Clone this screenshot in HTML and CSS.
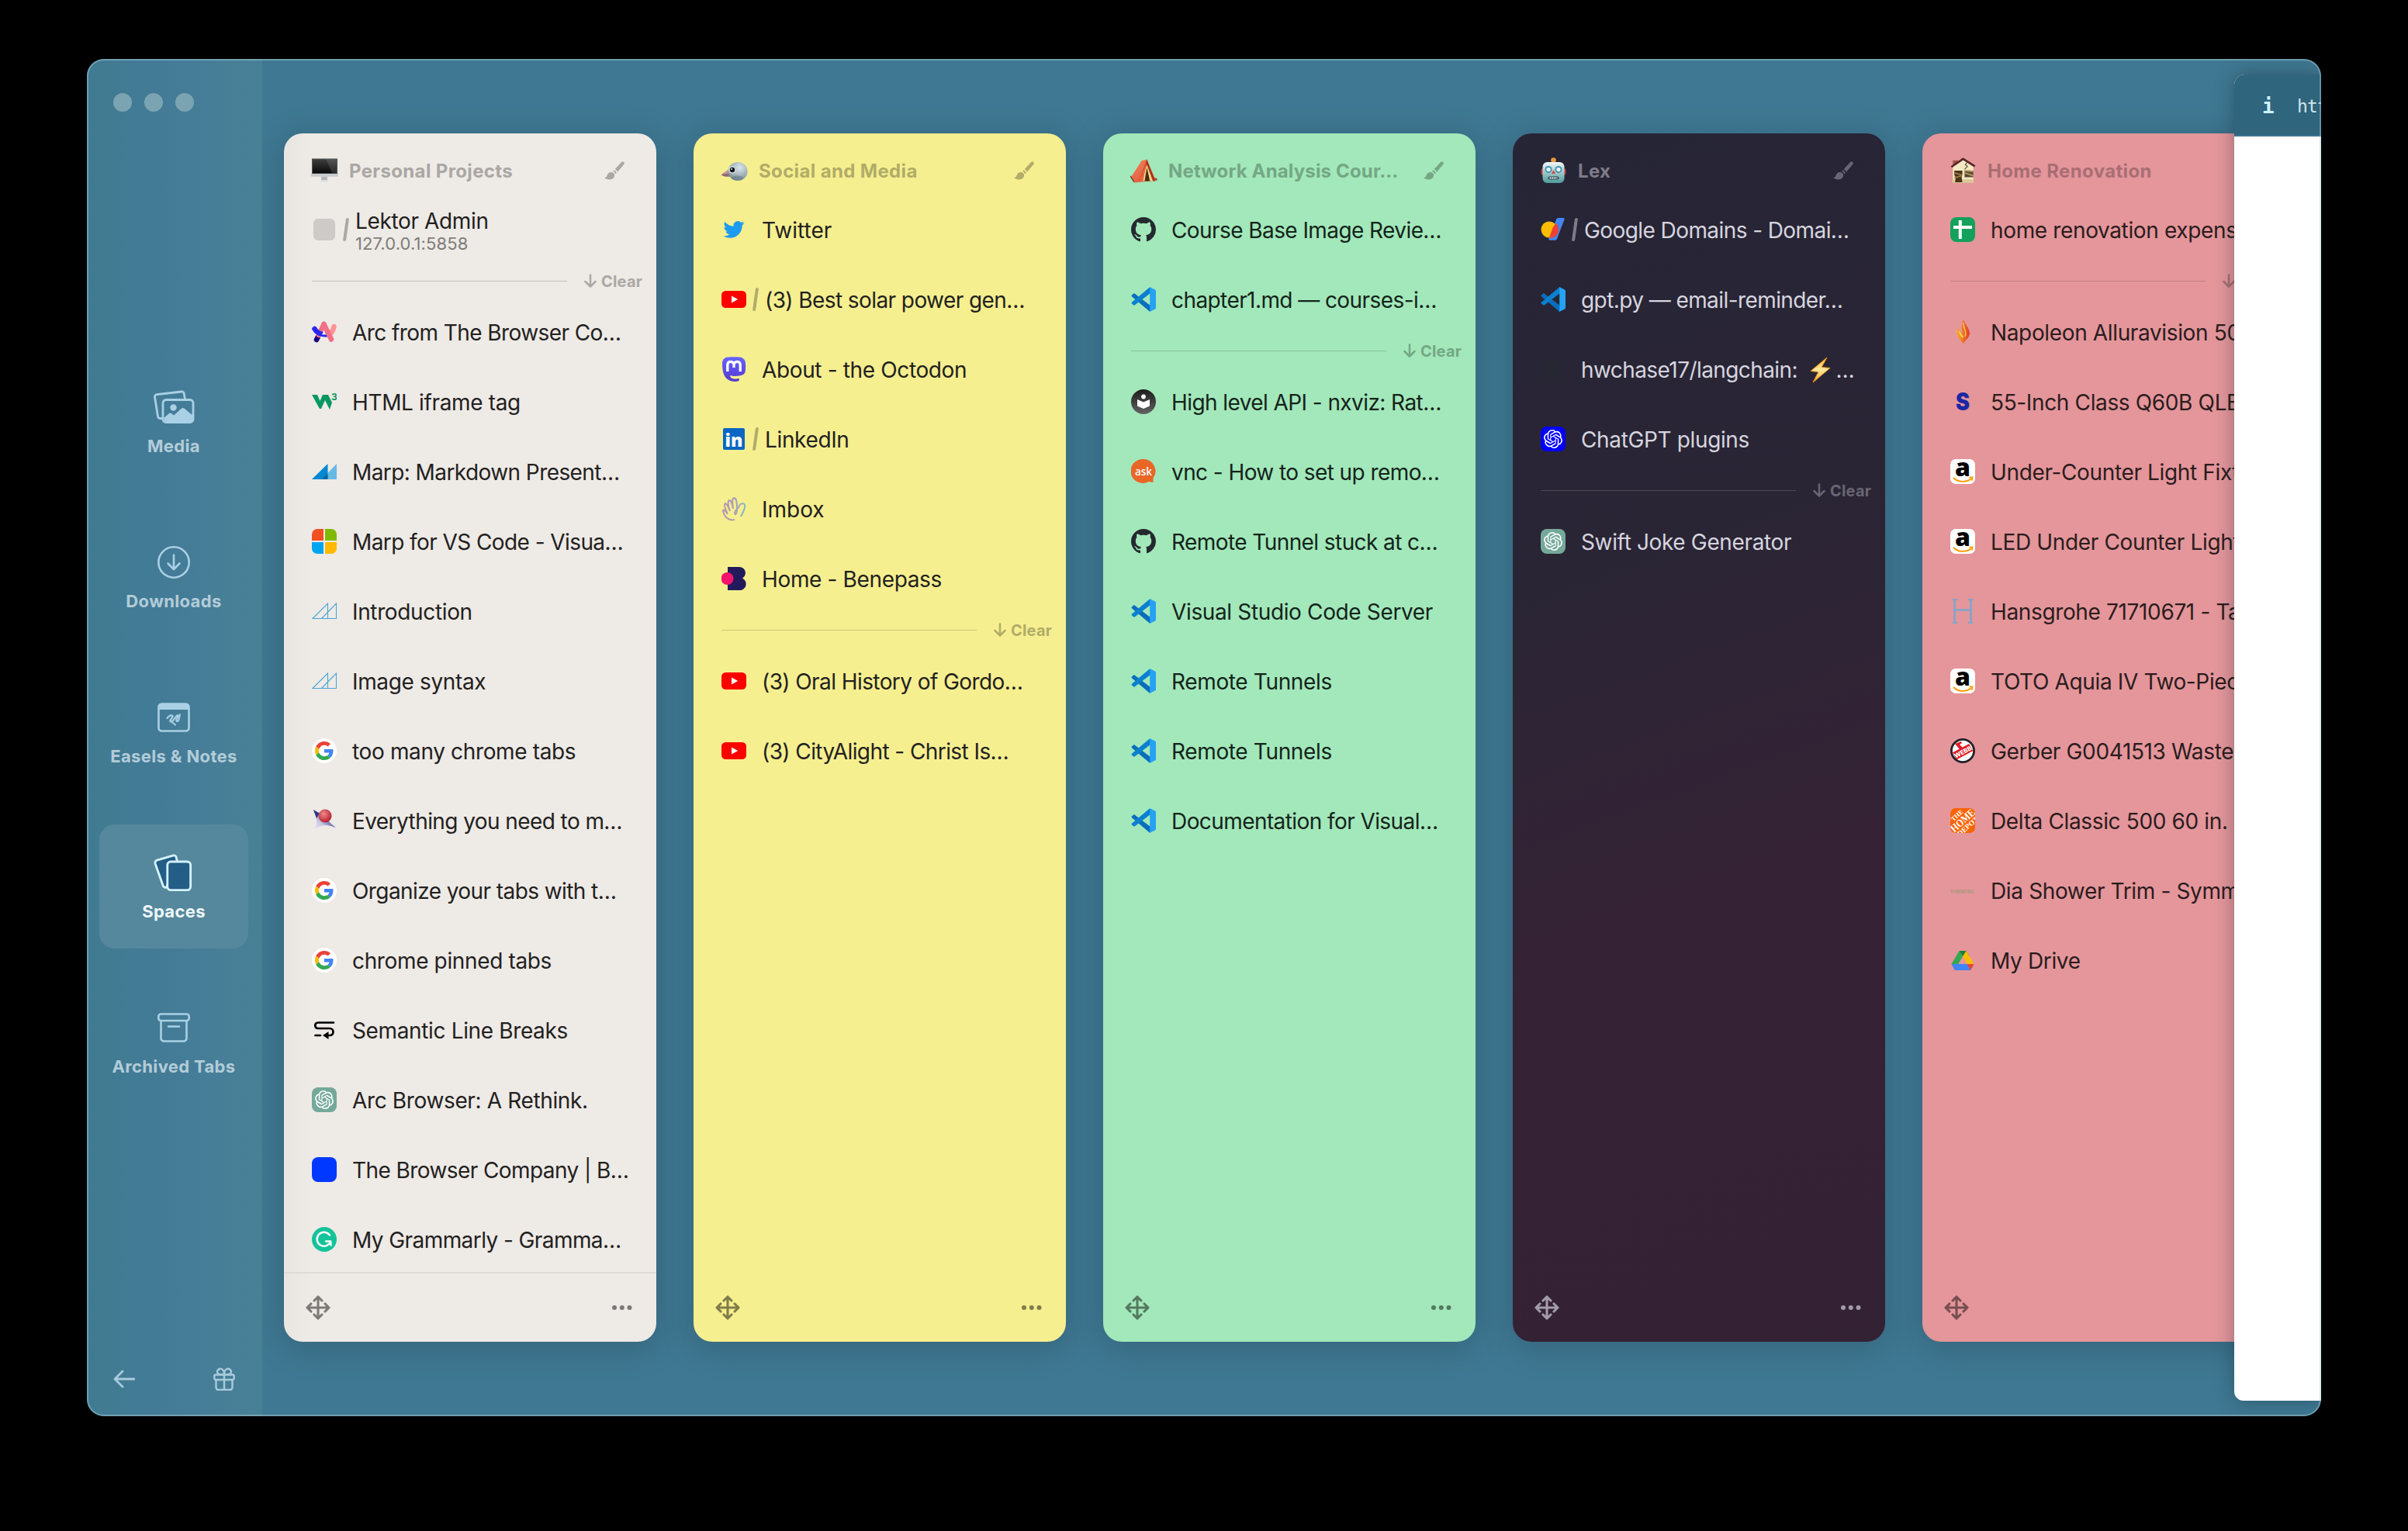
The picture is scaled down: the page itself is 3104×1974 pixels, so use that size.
FILE: index.html
```html
<!DOCTYPE html>
<html lang="en">
<head>
<meta charset="utf-8">
<title>Spaces</title>
<link rel="stylesheet" href="styles.css">
</head>
<body>
<svg class="sprite" aria-hidden="true">
  <defs>
    <linearGradient id="g-mast" x1="0" y1="0" x2="0" y2="1"><stop offset="0" stop-color="#6364ff"/><stop offset="1" stop-color="#563acc"/></linearGradient>
    <linearGradient id="g-dark" x1="0" y1="0" x2="0" y2="1"><stop offset="0" stop-color="#1c1c1c"/><stop offset="1" stop-color="#636363"/></linearGradient>
    <linearGradient id="g-hey" x1="0" y1="0" x2="1" y2="0"><stop offset="0" stop-color="#b98fae"/><stop offset=".6" stop-color="#a9a3b8"/><stop offset="1" stop-color="#7fb9c4"/></linearGradient>
    <linearGradient id="g-screen" x1="0" y1="0" x2="0" y2="1"><stop offset="0" stop-color="#3d3d3d"/><stop offset="1" stop-color="#0a0a0a"/></linearGradient>
    <linearGradient id="g-star" x1="0" y1="1" x2="1" y2="0"><stop offset="0" stop-color="#f2f0f5"/><stop offset=".35" stop-color="#c9c7e2"/><stop offset=".75" stop-color="#2b2f86"/></linearGradient>
    <radialGradient id="g-ball" cx=".4" cy=".35" r=".65"><stop offset="0" stop-color="#ee8a8a"/><stop offset="1" stop-color="#b8202e"/></radialGradient>
    <linearGradient id="g-robot" x1="0" y1="0" x2="0" y2="1"><stop offset="0" stop-color="#f3f8f8"/><stop offset="1" stop-color="#4d9a9c"/></linearGradient>
    <radialGradient id="g-bird" cx=".6" cy=".3" r=".7"><stop offset="0" stop-color="#dce6ea"/><stop offset="1" stop-color="#7e929c"/></radialGradient>
    <linearGradient id="g-tent" x1="0" y1="0" x2="1" y2="1"><stop offset="0" stop-color="#f58a62"/><stop offset="1" stop-color="#d9472b"/></linearGradient>
    <linearGradient id="g-fire" x1="0" y1="0" x2="1" y2="0"><stop offset="0" stop-color="#f6b02e"/><stop offset="1" stop-color="#df3a26"/></linearGradient>
    <linearGradient id="g-bolt" x1="0" y1="0" x2="0" y2="1"><stop offset="0" stop-color="#ffb52b"/><stop offset=".5" stop-color="#ffe9a0"/><stop offset="1" stop-color="#f6a224"/></linearGradient>
  </defs>
  <symbol id="brush" viewBox="0 0 26 24">
    <path d="M25.2.9c1 1 .8 2.200-.2 3.400L17 13.800c-.5-1.700-1.700-2.900-3.400-3.600L21.900 1.300c1-1.100 2.300-1.300 3.300-.4z"/>
    <path d="M12.400 11.400c1.600.5 2.900 1.800 3.400 3.600l-1.500 1.600c-.5-2-1.700-3.300-3.500-3.800z"/>
    <path d="M9.300 14c2.200.2 3.800 1.900 3.800 4 0 3.700-3.300 5.500-6.700 5.500-2.600 0-4.800-.9-6.300-2.500 1.700 0 2.700-.7 3.300-2.500C4.400 15.500 6.400 13.800 9.300 14z"/>
  </symbol>
  <symbol id="down" viewBox="0 0 16 18"><path d="M8 1.500v14.500M1.500 10l6.500 6.500L14.500 10" fill="none" stroke="currentColor" stroke-width="2.500" stroke-linecap="round" stroke-linejoin="round"/></symbol>
  <symbol id="move" viewBox="0 0 32 32"><path d="M16 3v26M3 16h26M11 7l5-5 5 5M11 25l5 5 5-5M7 11l-5 5 5 5M25 11l5 5-5 5" fill="none" stroke="currentColor" stroke-width="3.100" stroke-linecap="round" stroke-linejoin="round"/></symbol>
  <symbol id="dots" viewBox="0 0 26 6"><circle cx="3" cy="3" r="3"/><circle cx="12.800" cy="3" r="3"/><circle cx="22.500" cy="3" r="3"/></symbol>

  <symbol id="e-desktop" viewBox="0 0 36 32"><rect x="1" width="34" height="22" fill="#55585a"/><rect x="2" y="1" width="32" height="18.500" fill="url(#g-screen)"/><path d="M20 1h14v18.500h-6z" fill="#fff" opacity=".12"/><path d="M0 20h36v4H0z" fill="#c9cbcd"/><path d="M13.500 24h8v6h-8z" fill="#b3b5b8"/><path d="M13.500 28.500h8V31h-8z" fill="#e1e2e4"/></symbol>
  <symbol id="e-bird" viewBox="0 0 34 34"><path d="M13 13 0 22c1 2.500 6 3 13 2z" fill="#c9938f"/><path d="M3 21.500 13 20v4.500C8 25 2 25 1 22z" fill="#8e6a72"/><ellipse cx="21.500" cy="18" rx="12.500" ry="12" fill="url(#g-bird)"/><ellipse cx="21" cy="26.500" rx="8" ry="3" fill="#5f737d" opacity=".5"/><circle cx="14.500" cy="16" r="5" fill="#ccd8dd"/><circle cx="14.500" cy="16" r="3.200" fill="#121618"/><circle cx="13.700" cy="15" r=".9" fill="#fff"/></symbol>
  <symbol id="e-tent" viewBox="0 0 36 34"><path d="m0 25 2-1 13-20 7-2 10 24 3 2-1 2-29 3-1-4z" fill="url(#g-tent)"/><path d="M22 2 12 31h21z" fill="#a8321c"/><path d="m22 9-7 22h15z" fill="#f3d489"/><path d="m22 13-3 18h7z" fill="#4a2a12"/><path d="m22 4-5 27-5 .5z" fill="#e9653f"/><path d="M0 24l5 8M34 27l1 3" stroke="#6e4429" stroke-width="1.500"/></symbol>
  <symbol id="e-robot" viewBox="0 0 34 34"><circle cx="17" cy="3.500" r="3.300" fill="#e89a3e"/><rect x="1" y="14" width="32" height="9" rx="3" fill="#c0413c"/><rect x="3" y="6" width="28" height="27" rx="6" fill="url(#g-robot)"/><circle cx="10.500" cy="15.500" r="4.500" fill="#4493b0"/><circle cx="23.500" cy="15.500" r="4.500" fill="#4493b0"/><circle cx="10.500" cy="15.500" r="2.600" fill="#eafcff"/><circle cx="23.500" cy="15.500" r="2.600" fill="#eafcff"/><path d="m17 16 2.500 5h-5z" fill="#d6473e"/><rect x="10" y="24.500" width="14" height="4" rx="2" fill="#27464c"/><path d="M12 26.500h10" stroke="#fff" stroke-width="2" stroke-dasharray="2 1"/></symbol>
  <symbol id="e-house" viewBox="0 0 34 36"><path d="M3 4h7v9H3z" fill="#a4564b"/><path d="M3 12 17 3l14 9v23H3z" fill="#f4e8c2"/><path d="M3 30h28v5H3z" fill="#d9c796"/><path d="m1 13 16-11 16 10" fill="none" stroke="#5a2329" stroke-width="2.800"/><path d="m23 6-3 4 3 2-4 4" fill="none" stroke="#5b4a36" stroke-width="1.200"/><path d="M5 18h11v5l-1 4 1 7H6l1-7-2-3z" fill="#4b3419"/><path d="m5 21 10 3M5 28l10-3" stroke="#9c7c45" stroke-width="2"/><path d="M19 18h12v9H19z" fill="#5a4a32"/><path d="m19 21 12 4M19 18l12 1" stroke="#b59a63" stroke-width="2"/></symbol>
  <symbol id="e-bolt" viewBox="0 0 28 34"><path d="M22 1 1 18.500l10 1L4 33l22-18.500-11-1z" fill="url(#g-bolt)" stroke="#f09a1f" stroke-width="1" stroke-linejoin="round"/></symbol>

  <symbol id="arc" viewBox="0 0 32 32"><g fill="none" stroke-linecap="round" stroke-width="6.500"><path d="m6 26 1.500-3" stroke="#1a007f"/><path d="M28.500 9c-1 5-3 8-6 10.500" stroke="#ff9396"/><path d="M9 20 15.500 6" stroke="#f07088"/><path d="M3.500 12c3 5.500 8 8 16.500 7" stroke="#2a27ee"/><path d="m15.500 6 9.500 19.500" stroke="#f07088"/></g><path d="m15.500 14 3 5.500h-5.500z" fill="#eeeae6"/></symbol>
  <symbol id="w3" viewBox="0 0 32 32"><path d="M0 7h7l3.500 8L14 7h7l5 10-3 9-6-12-5 11h-2z" fill="#059862"/><text x="25" y="13.500" font-family="Inter, sans-serif" font-weight="700" font-size="12" fill="#059862">3</text></symbol>
  <symbol id="marp" viewBox="0 0 32 32"><path d="M0 26 20.500 6v20z" fill="#0288d1"/><path d="M12.500 26 32 6v20z" fill="#67b8e3"/><path d="m12.500 26 8-8v8z" fill="#02669d"/></symbol>
  <symbol id="marp-line" viewBox="0 0 32 32"><path d="M1 25.500 20.500 6v19.500zM12.500 25.500 31.500 6v19.500z" fill="none" stroke="#4aa5d6" stroke-width="1.100"/></symbol>
  <symbol id="microsoft" viewBox="0 0 32 32"><path d="M7 0h8v15H0V7a7 7 0 0 1 7-7z" fill="#f25022"/><path d="M17 0h8a7 7 0 0 1 7 7v8H17z" fill="#7fba00"/><path d="M0 17h15v15H7a7 7 0 0 1-7-7z" fill="#00a4ef"/><path d="M17 17h15v8a7 7 0 0 1-7 7h-8z" fill="#ffb900"/></symbol>
  <symbol id="google" viewBox="0 0 32 32"><circle cx="16" cy="16" r="16" fill="#fff"/><g transform="translate(4 4) scale(.5)"><path fill="#EA4335" d="M24 9.500c3.540 0 6.710 1.220 9.210 3.600l6.850-6.850C35.900 2.380 30.470 0 24 0 14.620 0 6.510 5.380 2.560 13.220l7.980 6.190C12.430 13.720 17.740 9.500 24 9.500z"/><path fill="#4285F4" d="M46.980 24.550c0-1.570-.15-3.090-.38-4.550H24v9.020h12.940c-.58 2.960-2.260 5.480-4.780 7.180l7.730 6c4.510-4.180 7.090-10.360 7.090-17.650z"/><path fill="#FBBC05" d="M10.530 28.590c-.48-1.450-.76-2.990-.76-4.590s.27-3.140.76-4.590l-7.980-6.190C.92 16.460 0 20.120 0 24c0 3.880.92 7.540 2.560 10.780l7.970-6.190z"/><path fill="#34A853" d="M24 48c6.480 0 11.930-2.130 15.890-5.810l-7.730-6c-2.150 1.450-4.920 2.300-8.160 2.300-6.260 0-11.570-4.220-13.470-9.910l-7.980 6.190C6.510 42.620 14.620 48 24 48z"/></g></symbol>
  <symbol id="ball" viewBox="0 0 32 32"><path d="M2 2c6 4 9 5 14 4 2 8 7 13 15 19-9-3-14-4-19-2-4 1-6 3-10 7 3-8 5-11 4-15C5 10 4 7 2 2z" fill="url(#g-star)"/><path d="m2 2 8 5-4 6z" fill="#30348c"/><circle cx="17" cy="10" r="8.500" fill="url(#g-ball)"/></symbol>
  <symbol id="sembr" viewBox="0 0 32 32"><path d="M28 6.500H8c-5 0-5 7.500 0 7.500h15c6 0 6 9 0 9h-3M4.500 23H11" fill="none" stroke="#000" stroke-width="2.700" stroke-linecap="round"/><path d="M21.500 18v10L14 23z"/></symbol>
  <symbol id="openai" viewBox="0 0 32 32"><rect width="32" height="32" rx="8"/><path transform="translate(4 4)" fill="#fff" d="M22.282 9.821a5.985 5.985 0 0 0-.516-4.911 6.046 6.046 0 0 0-6.510-2.900A6.065 6.065 0 0 0 4.981 4.182a5.985 5.985 0 0 0-3.998 2.900 6.046 6.046 0 0 0 .743 7.097 5.980 5.980 0 0 0 .511 4.911 6.051 6.051 0 0 0 6.515 2.900A5.985 5.985 0 0 0 13.260 24a6.056 6.056 0 0 0 5.772-4.206 5.989 5.989 0 0 0 3.998-2.900 6.056 6.056 0 0 0-.748-7.073zm-9.022 12.608a4.476 4.476 0 0 1-2.876-1.041l.142-.080 4.778-2.758a.795.795 0 0 0 .393-.681v-6.737l2.020 1.169a.071.071 0 0 1 .038.061v5.583a4.504 4.504 0 0 1-4.495 4.494zm-9.661-4.125a4.471 4.471 0 0 1-.535-3.014l.142.085 4.783 2.758a.771.771 0 0 0 .781 0l5.843-3.369v2.332a.080.080 0 0 1-.033.062L9.740 19.950a4.499 4.499 0 0 1-6.141-1.646zM2.341 7.896a4.485 4.485 0 0 1 2.366-1.973V11.600a.766.766 0 0 0 .388.677l5.814 3.354-2.020 1.169a.076.076 0 0 1-.071 0l-4.830-2.787A4.504 4.504 0 0 1 2.341 7.896zm16.596 3.856L13.104 8.364 15.119 7.200a.076.076 0 0 1 .071 0l4.830 2.791a4.494 4.494 0 0 1-.677 8.104v-5.677a.790.790 0 0 0-.407-.667zm2.011-3.023l-.142-.085-4.774-2.782a.776.776 0 0 0-.785 0L9.409 9.230V6.897a.066.066 0 0 1 .028-.061l4.830-2.787a4.499 4.499 0 0 1 6.680 4.660zM8.307 12.863l-2.020-1.164a.080.080 0 0 1-.038-.057V6.074a4.499 4.499 0 0 1 7.376-3.454l-.142.081L8.704 5.459a.795.795 0 0 0-.393.681zm1.098-2.365l2.602-1.500 2.607 1.500v2.999l-2.597 1.500-2.607-1.500Z"/></symbol>
  <symbol id="bcny" viewBox="0 0 32 32"><rect width="32" height="32" rx="8" fill="#0138ff"/></symbol>
  <symbol id="grammarly" viewBox="0 0 32 32"><circle cx="16" cy="16" r="16" fill="#15c39a"/><path d="M23 10.500a9 9 0 1 0 1.200 8h-6M24.200 18.500l.3 5" fill="none" stroke="#fff" stroke-width="2.400" stroke-linecap="round" stroke-linejoin="round"/></symbol>

  <symbol id="twitter" viewBox="0 0 32 32"><path transform="translate(2.500 2.500) scale(1.120)" fill="#1d9bf0" d="M23.953 4.570a10 10 0 01-2.825.775 4.958 4.958 0 002.163-2.723c-.951.555-2.005.959-3.127 1.184a4.920 4.920 0 00-8.384 4.482C7.690 8.095 4.067 6.130 1.640 3.162a4.822 4.822 0 00-.666 2.475c0 1.710.870 3.213 2.188 4.096a4.904 4.904 0 01-2.228-.616v.060a4.923 4.923 0 003.946 4.827 4.996 4.996 0 01-2.212.085 4.936 4.936 0 004.604 3.417 9.867 9.867 0 01-6.102 2.105c-.390 0-.779-.023-1.170-.067a13.995 13.995 0 007.557 2.209c9.053 0 13.998-7.496 13.998-13.985 0-.210 0-.420-.015-.630A9.935 9.935 0 0024 4.590z"/></symbol>
  <symbol id="youtube" viewBox="0 0 32 32"><rect y="5" width="32" height="22" rx="5.500" fill="#f00"/><path d="m13 11.500 8.200 4.500-8.200 4.500z" fill="#fff"/></symbol>
  <symbol id="mastodon" viewBox="0 0 32 32"><path d="M8 .5C11 0 21 0 24 .5c4 .5 7 4 7 7.500.3 4 .2 8-.3 11-.6 3.500-4 5-8 5.500-4 .6-8 .6-11.500-.5 0 3.500 3 4.500 6.500 4.500 2 0 3.500-.3 5-.7v3C20 32.500 14 32.500 9.500 30 3.500 27 1 20 1 8.500 1 4 4 1 8 .5z" fill="url(#g-mast)"/><path d="M7.800 19V10.500c0-5 6.500-5.500 8.200-1v4.500V9.500c1.700-4.500 8.200-4 8.200 1V19" fill="none" stroke="#fff" stroke-width="3.300"/></symbol>
  <symbol id="linkedin" viewBox="0 0 32 32"><rect x="2" y="2" width="28" height="28" rx="2" fill="#0a66c2"/><text x="16" y="25.500" text-anchor="middle" font-family="'Open Sans', sans-serif" font-weight="800" font-size="23" fill="#fff">in</text></symbol>
  <symbol id="hey" viewBox="0 0 32 32"><path d="M17 30c-8 2-14-4-15-12 2-1 4 1 6 5C5 17 3 11 5 9c2 0 4 5 6 10C8 12 8 6 10 5c3 0 4 6 5 11-1-7-2-13 1-14 4 0 4 7 4 15 0 6-3 8-3 4 0-4 5-5 6-9 1-3 6-4 7-1 1 5-3 11-5 15" fill="none" stroke="url(#g-hey)" stroke-width="2"/></symbol>
  <symbol id="benepass" viewBox="0 0 32 32"><path d="M8 1h15c8 0 11 10 4 14.500 8 4.500 5 15.500-4 15.500H8z" fill="#231a5c"/><circle cx="7.500" cy="16" r="8" fill="#f5136b"/></symbol>

  <symbol id="github" viewBox="0 0 16 16"><path fill="#24292f" d="M8 0C3.580 0 0 3.580 0 8c0 3.540 2.290 6.530 5.470 7.590.400.070.550-.170.550-.380 0-.190-.010-.820-.010-1.490-2.010.370-2.530-.490-2.690-.940-.090-.230-.480-.940-.820-1.130-.280-.150-.680-.520-.010-.530.630-.010 1.080.580 1.230.820.720 1.210 1.870.870 2.330.660.070-.520.280-.870.510-1.070-1.780-.200-3.640-.890-3.640-3.950 0-.870.310-1.590.820-2.150-.080-.200-.360-1.020.080-2.120 0 0 .670-.210 2.200.820.640-.180 1.320-.270 2-.270s1.360.090 2 .270c1.530-1.040 2.200-.820 2.200-.820.440 1.100.160 1.920.080 2.120.510.560.820 1.270.820 2.150 0 3.070-1.870 3.750-3.650 3.950.290.250.540.730.540 1.480 0 1.070-.010 1.930-.010 2.200 0 .210.150.460.550.380A8.010 8.010 0 0 0 16 8c0-4.420-3.580-8-8-8z"/></symbol>
  <symbol id="vscode" viewBox="0 0 32 32"><path d="M1 10.500 3 8.700c.6-.5 1.300-.5 1.900 0L25 24v7.500a2 2 0 0 1-1.800-.6L.9 12.300c-.6-.6-.5-1.200.1-1.800z" fill="#0a6ebd"/><path d="M1 21.500 3 23.300c.6.500 1.300.5 1.900 0L25 8V.5a2 2 0 0 0-1.800.6L.9 19.700c-.6.600-.5 1.200.1 1.800z" fill="#0b80cf"/><path d="M23 31.200c.7.700 1.200.6 2 .3l6-2.900c.6-.3 1-.9 1-1.600V5c0-.7-.4-1.300-1-1.600L25 .5c-.8-.4-1.400-.3-2 .3.800-.7 1.200.2 1.200 1v28.400c0 .8-.5 1.700-1.200 1z" fill="#26a2f3"/></symbol>
  <symbol id="reader" viewBox="0 0 32 32"><circle cx="16" cy="16" r="16" fill="url(#g-dark)"/><circle cx="16" cy="9.500" r="2.900" fill="#fff"/><path d="m8 13 8 3.500L24 13v8.500L16 25l-8-3.500z" fill="#fff"/></symbol>
  <symbol id="ask" viewBox="0 0 32 32"><path d="M16 0a15.500 15.500 0 0 1 12.500 24.500V30l-6-1A15.500 15.500 0 1 1 16 0z" fill="#ea6627"/><text x="16" y="20.500" text-anchor="middle" font-family="'Open Sans', sans-serif" font-weight="600" font-size="13.500" fill="#fff">ask</text></symbol>

  <symbol id="gdomains" viewBox="0 0 32 32"><path d="M20 3c.5-1.300 1.300-2 2.500-2H29c1.500 0 2 1 1.500 2L21 28c-.5 1.200-1.200 1.800-2.500 1.800H12c-1.500 0-2-1-1.500-2z" fill="#4285f4"/><circle cx="11" cy="16" r="10.500" fill="#fbbc04"/><path d="m15.500 13.500 4-5.500a10.500 10.500 0 0 1-8.500 18.500z" fill="#ea4335"/></symbol>
  <symbol id="github-dim" viewBox="0 0 32 32"><circle cx="16" cy="16" r="14" fill="#24292f" opacity=".55"/></symbol>

  <symbol id="sheets" viewBox="0 0 32 32"><rect width="32" height="32" rx="8" fill="#13a15b"/><path d="M12.800 4v24M4 13h24" stroke="#fff" stroke-width="4"/></symbol>
  <symbol id="flame" viewBox="0 0 32 32"><path d="M17 0c1 5 8 11 8 18-1 6-5 8-8 13-4-4-9-9-9-15 0-2 1-4 3-6 0 4 2 6 4 10 0-8-1-14 2-20z" fill="url(#g-fire)"/><path d="M16 24c-3-3-5-6-5-10l6 8z" fill="#fbd14b"/><path d="M17 4c-1 7 5 10 2 18" fill="none" stroke="#fbc04a" stroke-width="1.500"/></symbol>
  <symbol id="s-logo" viewBox="0 0 32 32"><text x="16" y="27" text-anchor="middle" font-family="Inter, sans-serif" font-weight="900" font-size="31" textLength="18" lengthAdjust="spacingAndGlyphs" fill="#1b27a4">S</text></symbol>
  <symbol id="amazon" viewBox="0 0 32 32"><rect width="32" height="32" rx="7" fill="#fff"/><text x="16" y="22" text-anchor="middle" font-family="'Open Sans', sans-serif" font-weight="800" font-size="32">a</text><path d="M4 24c6 6 16 6.500 23 1.500M28 27.500l.5-4h-4" fill="none" stroke="#ff9900" stroke-width="1.800"/></symbol>
  <symbol id="h-logo" viewBox="0 0 32 32"><path d="M3 1h6M3 31h6M23 1h6M23 31h6M5.500 1v30M26.500 1v30M5.500 14.500h21" fill="none" stroke="#7fa6cb" stroke-width="2.600"/></symbol>
  <symbol id="webb" viewBox="0 0 32 32"><circle cx="16" cy="16" r="14.600" fill="#fff" stroke="#22222a" stroke-width="2.800"/><path d="m6 7 8-3 1 2-3 2 4 4-4 2z" fill="#e01a22"/><g transform="rotate(-28 16 17)"><rect x="4" y="12" width="24" height="10.500" fill="#e01a22"/><text x="16" y="20.500" text-anchor="middle" font-family="Inter, sans-serif" font-weight="800" font-size="8" fill="#fff">WEBB</text></g></symbol>
  <symbol id="depot" viewBox="0 0 32 32"><rect width="32" height="32" rx="7" fill="#f96302"/><g transform="rotate(-42 16 16)" fill="#fff" text-anchor="middle" font-family="'Liberation Serif', serif" font-weight="700"><text x="15" y="9" font-size="8.500">THE</text><text x="16" y="20.500" font-size="14" textLength="37" lengthAdjust="spacingAndGlyphs">HOME</text><text x="16" y="29" font-size="9.500">DEPOT</text></g></symbol>
  <symbol id="symmons" viewBox="0 0 32 32"><text x="0" y="19.500" font-family="Inter, sans-serif" font-size="5.500" textLength="30" fill="#8c9a6c">SYMMONS</text></symbol>
  <symbol id="drive" viewBox="0 0 32 32"><path d="M11.500 4h9l4 7-8.500 0z" fill="#188038"/><path d="M11.500 4 16 11 6 28.500 1.500 21z" fill="#34a853"/><path d="M20.500 4 30.500 21H21.500L16 11z" fill="#fbbc04"/><path d="M1.500 21h29L26 29H6z" fill="#4285f4"/><path d="M21.500 21h9L26 29z" fill="#ea4335"/></symbol>
</svg>

<div class="window">
  <aside class="sidebar">
    <div class="lights"><i></i><i></i><i></i></div>
    <nav class="nav">
      <a class="nav-item">
        <svg class="nav-icon" viewBox="0 0 54 44"><g fill="none" stroke="currentColor" stroke-width="2.800" stroke-linejoin="round"><path d="M12.500 36.500H9.500a3 3 0 0 1-3-2.600L2.500 9a3 3 0 0 1 2.600-3.400L37 2a3 3 0 0 1 3.300 2.600l1 6.500"/><rect x="13" y="12.500" width="39" height="29" rx="4"/></g><circle cx="26.500" cy="22.500" r="4.200" fill="currentColor"/><path d="m14 36 7-6c1-.8 2-.8 3 0l3 2.500 9.500-8.500c1.500-1.200 3-1.200 4.500 0L52 33v6a3 3 0 0 1-3 3H16z" fill="currentColor"/></svg>
        <span>Media</span></a>
      <a class="nav-item">
        <svg class="nav-icon" viewBox="0 0 54 44"><g fill="none" stroke="currentColor" stroke-width="2.600" stroke-linecap="round" stroke-linejoin="round"><circle cx="27" cy="22" r="19.700"/><path d="M27 12.500v18M19.500 23.500l7.500 7.500 7.500-7.500"/></g></svg>
        <span>Downloads</span></a>
      <a class="nav-item">
        <svg class="nav-icon" viewBox="0 0 54 44"><rect x="7.500" y="4.500" width="39" height="35" rx="4" fill="none" stroke="currentColor" stroke-width="2.600"/><path d="M7 12V8a4 4 0 0 1 4-4h32a4 4 0 0 1 4 4v4z" fill="currentColor"/><path d="M18.500 23c3-5 9-4.500 6.500-1s-4 5-1.500 5.500c3 .5 6-8 8.500-8.500 2.500 0-4 7-1 8s3-7 4-8.500M24 27.500l5 4" fill="none" stroke="currentColor" stroke-width="2.200" stroke-linecap="round"/></svg>
        <span>Easels &amp; Notes</span></a>
      <a class="nav-item active">
        <svg class="nav-icon spaces" viewBox="0 0 54 50"><g fill="#245d86" stroke="#d3f2fb" stroke-width="3" stroke-linejoin="round"><path d="M18 45h-1a3.500 3.500 0 0 1-3.300-2.300L3.200 13a3.500 3.500 0 0 1 2.300-4.400L27 2.200a3.500 3.500 0 0 1 4.300 2.300L33 12z"/><rect x="19.500" y="10.500" width="31" height="38" rx="4.500"/></g></svg>
        <span>Spaces</span></a>
      <a class="nav-item">
        <svg class="nav-icon" viewBox="0 0 54 44"><g fill="none" stroke="currentColor" stroke-width="2.600" stroke-linecap="round" stroke-linejoin="round"><rect x="7.300" y="4.500" width="39.400" height="8.500" rx="3"/><path d="M10.500 13v22.500a4 4 0 0 0 4 4h25a4 4 0 0 0 4-4V13M20 20.500h14"/></g></svg>
        <span>Archived Tabs</span></a>
    </nav>
    <div class="side-foot">
      <svg class="back" viewBox="0 0 28 24"><path d="M27 12H2M12 2 2 12l10 10" fill="none" stroke="currentColor" stroke-width="2.800" stroke-linecap="round" stroke-linejoin="round"/></svg>
      <svg class="gift" viewBox="0 0 28 30"><g fill="none" stroke="currentColor" stroke-width="2.400" stroke-linejoin="round"><rect x="1.300" y="9.500" width="25.400" height="6.500" rx="2"/><path d="M3.500 16v10a3 3 0 0 0 3 3h15a3 3 0 0 0 3-3V16M14 9v20"/><path d="M14 9C7 10 5 8 5 5.500S8 1 10.500 2 14 5.500 14 9c0-3.500 1-6 3.500-7S23 3 23 5.500 21 10 14 9z"/></g></svg>
    </div>
  </aside>

  <main class="board">
    <section class="space sand">
      <header><svg class="emoji"><use href="#e-desktop"/></svg><h2>Personal Projects</h2><svg class="brush"><use href="#brush"/></svg></header>
      <div class="tabs">
        <div class="tab"><span class="blank"></span><i class="slash"></i><p>Lektor Admin<small>127.0.0.1:5858</small></p></div>
        <div class="clear"><hr><svg><use href="#down"/></svg><b>Clear</b></div>
        <div class="tab"><svg><use href="#arc"/></svg><p class="cut">Arc from The Browser Co…</p></div>
        <div class="tab"><svg><use href="#w3"/></svg><p>HTML iframe tag</p></div>
        <div class="tab"><svg><use href="#marp"/></svg><p class="cut">Marp: Markdown Present…</p></div>
        <div class="tab"><svg><use href="#microsoft"/></svg><p class="cut">Marp for VS Code - Visua…</p></div>
        <div class="tab"><svg><use href="#marp-line"/></svg><p>Introduction</p></div>
        <div class="tab"><svg><use href="#marp-line"/></svg><p>Image syntax</p></div>
        <div class="tab"><svg><use href="#google"/></svg><p>too many chrome tabs</p></div>
        <div class="tab"><svg><use href="#ball"/></svg><p class="cut">Everything you need to m…</p></div>
        <div class="tab"><svg><use href="#google"/></svg><p class="cut">Organize your tabs with t…</p></div>
        <div class="tab"><svg><use href="#google"/></svg><p>chrome pinned tabs</p></div>
        <div class="tab"><svg><use href="#sembr"/></svg><p>Semantic Line Breaks</p></div>
        <div class="tab"><svg class="gpt"><use href="#openai"/></svg><p>Arc Browser: A Rethink.</p></div>
        <div class="tab"><svg><use href="#bcny"/></svg><p class="cut">The Browser Company | B…</p></div>
        <div class="tab"><svg><use href="#grammarly"/></svg><p class="cut">My Grammarly - Gramma…</p></div>
      </div>
      <footer class="ruled"><svg class="move"><use href="#move"/></svg><svg class="dots"><use href="#dots"/></svg></footer>
    </section>

    <section class="space lemon">
      <header><svg class="emoji"><use href="#e-bird"/></svg><h2>Social and Media</h2><svg class="brush"><use href="#brush"/></svg></header>
      <div class="tabs">
        <div class="tab"><svg><use href="#twitter"/></svg><p class="wide">Twitter</p></div>
        <div class="tab"><svg><use href="#youtube"/></svg><i class="slash"></i><p class="cut">(3) Best solar power gen…</p></div>
        <div class="tab"><svg><use href="#mastodon"/></svg><p>About - the Octodon</p></div>
        <div class="tab"><svg><use href="#linkedin"/></svg><i class="slash"></i><p>LinkedIn</p></div>
        <div class="tab"><svg><use href="#hey"/></svg><p class="wide">Imbox</p></div>
        <div class="tab"><svg><use href="#benepass"/></svg><p>Home - Benepass</p></div>
        <div class="clear"><hr><svg><use href="#down"/></svg><b>Clear</b></div>
        <div class="tab"><svg><use href="#youtube"/></svg><p class="cut">(3) Oral History of Gordo…</p></div>
        <div class="tab"><svg><use href="#youtube"/></svg><p class="cut">(3) CityAlight - Christ Is…</p></div>
      </div>
      <footer><svg class="move"><use href="#move"/></svg><svg class="dots"><use href="#dots"/></svg></footer>
    </section>

    <section class="space mint">
      <header><svg class="emoji"><use href="#e-tent"/></svg><h2 class="cut">Network Analysis Cour…</h2><svg class="brush"><use href="#brush"/></svg></header>
      <div class="tabs">
        <div class="tab"><svg><use href="#github"/></svg><p class="cut">Course Base Image Revie…</p></div>
        <div class="tab"><svg><use href="#vscode"/></svg><p class="cut">chapter1.md — courses-i…</p></div>
        <div class="clear"><hr><svg><use href="#down"/></svg><b>Clear</b></div>
        <div class="tab"><svg><use href="#reader"/></svg><p class="cut">High level API - nxviz: Rat…</p></div>
        <div class="tab"><svg><use href="#ask"/></svg><p class="cut">vnc - How to set up remo…</p></div>
        <div class="tab"><svg><use href="#github"/></svg><p class="cut">Remote Tunnel stuck at c…</p></div>
        <div class="tab"><svg><use href="#vscode"/></svg><p>Visual Studio Code Server</p></div>
        <div class="tab"><svg><use href="#vscode"/></svg><p>Remote Tunnels</p></div>
        <div class="tab"><svg><use href="#vscode"/></svg><p>Remote Tunnels</p></div>
        <div class="tab"><svg><use href="#vscode"/></svg><p class="cut">Documentation for Visual…</p></div>
      </div>
      <footer><svg class="move"><use href="#move"/></svg><svg class="dots"><use href="#dots"/></svg></footer>
    </section>

    <section class="space night">
      <header><svg class="emoji"><use href="#e-robot"/></svg><h2>Lex</h2><svg class="brush"><use href="#brush"/></svg></header>
      <div class="tabs">
        <div class="tab"><svg><use href="#gdomains"/></svg><i class="slash"></i><p class="cut">Google Domains - Domai…</p></div>
        <div class="tab"><svg><use href="#vscode"/></svg><p class="cut">gpt.py — email-reminder…</p></div>
        <div class="tab"><svg><use href="#github-dim"/></svg><p class="cut">hwchase17/langchain: <svg class="bolt"><use href="#e-bolt"/></svg> …</p></div>
        <div class="tab"><svg class="gpt-plus"><use href="#openai"/></svg><p>ChatGPT plugins</p></div>
        <div class="clear"><hr><svg><use href="#down"/></svg><b>Clear</b></div>
        <div class="tab"><svg class="gpt"><use href="#openai"/></svg><p>Swift Joke Generator</p></div>
      </div>
      <footer><svg class="move"><use href="#move"/></svg><svg class="dots"><use href="#dots"/></svg></footer>
    </section>

    <section class="space rose">
      <header><svg class="emoji"><use href="#e-house"/></svg><h2>Home Renovation</h2></header>
      <div class="tabs">
        <div class="tab"><svg><use href="#sheets"/></svg><p>home renovation expens</p></div>
        <div class="clear"><hr><svg><use href="#down"/></svg></div>
        <div class="tab"><svg><use href="#flame"/></svg><p>Napoleon Alluravision 50</p></div>
        <div class="tab"><svg><use href="#s-logo"/></svg><p>55-Inch Class Q60B QLE</p></div>
        <div class="tab"><svg><use href="#amazon"/></svg><p>Under-Counter Light Fixt</p></div>
        <div class="tab"><svg><use href="#amazon"/></svg><p>LED Under Counter Light</p></div>
        <div class="tab"><svg><use href="#h-logo"/></svg><p>Hansgrohe 71710671 - Ta</p></div>
        <div class="tab"><svg><use href="#amazon"/></svg><p>TOTO Aquia IV Two-Piec</p></div>
        <div class="tab"><svg><use href="#webb"/></svg><p>Gerber G0041513 Waste</p></div>
        <div class="tab"><svg><use href="#depot"/></svg><p>Delta Classic 500 60 in.</p></div>
        <div class="tab"><svg><use href="#symmons"/></svg><p>Dia Shower Trim - Symm</p></div>
        <div class="tab"><svg><use href="#drive"/></svg><p>My Drive</p></div>
      </div>
      <footer><svg class="move"><use href="#move"/></svg></footer>
    </section>
  </main>

  <div class="page">
    <div class="urlbar"><b>i</b><span>htt</span></div>
    <div class="web"></div>
  </div>
</div>
</body>
</html>
```

FILE: styles.css
```css
* { box-sizing: border-box; }

body {
  margin: 0;
  height: 1974px;
  padding: 76px 112px 0;
  background: #000;
  font-family: Inter, "Liberation Sans", sans-serif;
  overflow: hidden;
}

h2, p { margin: 0; }
svg { display: block; flex: none; }
.sprite { position: absolute; width: 0; height: 0; }

.window {
  position: relative;
  display: flex;
  width: 2880px;
  height: 1750px;
  border-radius: 22px;
  overflow: hidden;
  background: #3f7892;
}
/* light rim drawn over everything in the window */
.window::after {
  content: "";
  position: absolute;
  inset: 0;
  border-radius: 22px;
  box-shadow: inset 0 0 0 2px rgba(170, 205, 215, .45);
}

/* sidebar */
.sidebar {
  flex: none;
  display: flex;
  flex-direction: column;
  width: 226px;
  background: linear-gradient(90deg, #3f7b90 0, #437b97 40%, #467e98 70%, #488195 100%);
}
.lights { display: flex; gap: 16px; padding: 44px 0 0 34px; }
.lights i { width: 24px; height: 24px; border-radius: 50%; background: #7ba4b3; }
.nav {
  display: flex;
  flex-direction: column;
  gap: 40px;
  margin-top: 319px;
  padding: 0 18px 0 16px;
  color: #a9d0e4;
}
.nav-item {
  display: flex;
  flex-direction: column;
  align-items: center;
  height: 160px;
  padding-top: 40px;
  border-radius: 20px;
  font-size: 22px;
  font-weight: 700;
  line-height: 28px;
  letter-spacing: .35px;
}
.nav-item span { margin-top: 14px; color: #b3ccd8; white-space: nowrap; }
.nav-item.active { background: #55889d; }
.nav-item.active span { color: #eef6fa; }
.nav-icon { width: 54px; height: 44px; }
.nav-icon.spaces { width: 52px; height: 50px; margin: -3px 0 -3px -2px; }
.side-foot {
  display: flex;
  justify-content: space-between;
  align-items: center;
  margin-top: auto;
  padding: 0 35px 33px 34px;
  color: #a9cbdc;
}
.back { width: 28px; height: 24px; }
.gift { width: 28px; height: 30px; }

/* board */
.board {
  flex: 1;
  display: flex;
  gap: 48px;
  min-width: 0;
  padding: 96px 0 0 28px;
  overflow: hidden;
}
.space {
  flex: none;
  display: flex;
  flex-direction: column;
  width: 480px;
  height: 1558px;
  border-radius: 24px;
  color: #222120;
  box-shadow: 0 6px 40px rgba(20, 40, 50, .26);
}
.sand { --muted: #aaa7a4; --rule: #c4c1be; --tool: #7c7976; background: linear-gradient(90deg, #e9e6e2, #eeeae6 8%); }
.lemon { --muted: #b1ac68; --rule: #cdc776; --tool: #807c4a; background: #f6ef8f; }
.mint { --muted: #74a785; --rule: #86c09a; --tool: #547960; background: #a2e8ba; color: #14231a; }
.night { --muted: #7d7c88; --rule: #4a4956; --tool: #a19ca8; background: linear-gradient(160deg, #262536 0, #2a2535 35%, #362235 65%, #332134 100%); color: #d6d5df; }
.rose { --muted: #a96e73; --rule: #c27e83; --tool: #784e51; background: #e4969b; color: #2b1c1d; }

.space header {
  flex: none;
  display: flex;
  align-items: center;
  height: 79px;
  padding: 17px 41px 0 35px;
  color: var(--muted);
}
.emoji { width: 35px; height: 34px; }
.space h2 {
  flex: 1;
  margin-left: 14px;
  padding-top: 2px;
  font-size: 24px;
  font-weight: 700;
  line-height: 30px;
  letter-spacing: .35px;
  white-space: nowrap;
}
.space h2.cut { letter-spacing: .15px; }
.brush { width: 26px; height: 24px; fill: currentColor; }
.night .brush { opacity: .75; }

.tabs { flex: 1; min-height: 0; }
.tab { display: flex; align-items: center; height: 90px; padding-left: 36px; }
.tab > svg { width: 32px; height: 32px; }
.tab p {
  margin-left: 20px;
  padding-top: 2px;
  font-size: 28px;
  line-height: 34px;
  letter-spacing: -.36px;
  white-space: nowrap;
}
.tab p.cut { letter-spacing: -.58px; }
.tab p.wide { letter-spacing: 0; }
.tab small {
  display: block;
  font-size: 22px;
  line-height: 25px;
  letter-spacing: .1px;
  color: #7f7c7a;
}
.blank { width: 28px; height: 28px; margin: 0 2px; border-radius: 6px; background: #cdcac7; }
.slash {
  width: 4px;
  height: 30px;
  margin-left: 10px;
  border-radius: 2px;
  background: var(--muted);
  transform: skewX(-8deg);
}
.tab .slash + p { margin-left: 10px; }
.bolt { display: inline-block; width: 28px; height: 34px; margin: 0 -2px 0 9px; vertical-align: -7px; }
.gpt { fill: #75a99a; }
.gpt-plus { fill: #0000ff; }

.clear {
  display: flex;
  align-items: center;
  height: 42px;
  padding-left: 36px;
  color: var(--muted);
}
.clear hr { width: 329px; height: 1px; margin: 0; border: 0; background: var(--rule); }
.clear svg { width: 16px; height: 18px; margin-left: 22px; }
.clear b { margin-left: 6px; padding-top: 1px; font-size: 20px; line-height: 24px; letter-spacing: .2px; }
.night .clear svg, .night .clear b { opacity: .75; }

.space footer {
  flex: none;
  display: flex;
  justify-content: space-between;
  align-items: center;
  height: 90px;
  padding: 0 31px 0 28px;
  border-top: 2px solid transparent;
  color: var(--tool);
}
.space footer.ruled { border-color: #dedad7; }
.move { width: 32px; height: 32px; }
.dots { width: 26px; height: 6px; fill: currentColor; }

/* page sliding in from the right edge */
.page {
  position: absolute;
  top: 20px;
  right: 0;
  width: 112px;
  height: 1710px;
  border-radius: 14px 0 0 12px;
  overflow: hidden;
  background: #fff;
  box-shadow: 0 0 24px rgba(20, 40, 50, .4);
}
.urlbar {
  display: flex;
  align-items: center;
  height: 80px;
  padding: 4px 0 0 36px;
  background: #2f657d;
  border-bottom: 2px solid #3c7590;
  font-family: "DejaVu Sans Mono", monospace;
  font-size: 23px;
  letter-spacing: -.7px;
  color: #d3e3ea;
  white-space: nowrap;
}
.urlbar b { color: #cdf2ff; font-size: 26px; }
.urlbar span { margin-left: 30px; }
```
